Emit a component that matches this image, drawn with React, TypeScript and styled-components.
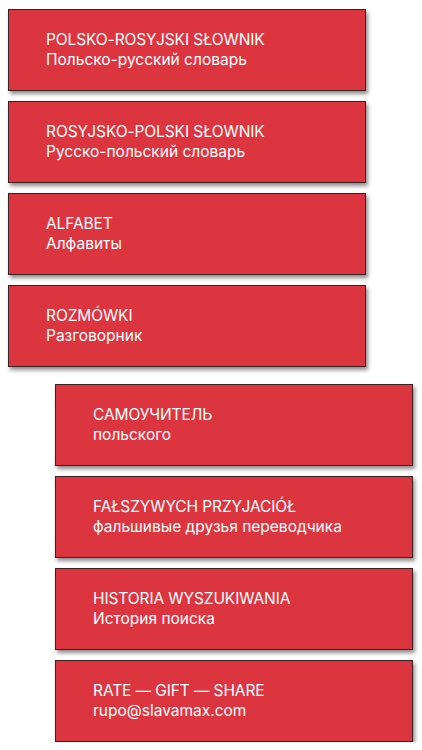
import React from "react";
import styled, { createGlobalStyle } from "styled-components";

const Global = createGlobalStyle`
  html, body { margin: 0; padding: 0; background: #ffffff; }
  body { font-family: Inter, "Open Sans", "Noto Sans", sans-serif; }
`;

const Page = styled.div`
  display: flex;
  flex-direction: column;
  gap: 17px;
  padding-top: 9px;
  width: 422px;
`;

const Group = styled.div<{ $indent: number }>`
  display: flex;
  flex-direction: column;
  gap: 10px;
  padding-left: ${(p) => p.$indent}px;
`;

const Card = styled.div`
  box-sizing: border-box;
  width: 358px;
  height: 82px;
  background: #dd3540;
  border: 1px solid #3a2224;
  box-shadow: 2px 3px 4px rgba(0, 0, 0, 0.45);
  display: flex;
  flex-direction: column;
  justify-content: center;
  padding-left: 37px;
  color: #ffffff;
  cursor: pointer;
`;

const Title = styled.div`
  font-size: 15.5px;
  line-height: 20px;
  font-weight: 400;
  letter-spacing: -0.1px;
`;

const Sub = styled.div`
  font-size: 15.5px;
  line-height: 20px;
  font-weight: 400;
  letter-spacing: 0;
`;

const first = [
  ["POLSKO-ROSYJSKI SŁOWNIK", "Польско-русский словарь"],
  ["ROSYJSKO-POLSKI SŁOWNIK", "Русско-польский словарь"],
  ["ALFABET", "Алфавиты"],
  ["ROZMÓWKI", "Разговорник"],
];

const second = [
  ["САМОУЧИТЕЛЬ", "польского"],
  ["FAŁSZYWYCH PRZYJACIÓŁ", "фальшивые друзья переводчика"],
  ["HISTORIA WYSZUKIWANIA", "История поиска"],
  ["RATE — GIFT — SHARE", "rupo@slavamax.com"],
];

export default function App() {
  return (
    <>
      <Global />
      <Page>
        <Group $indent={8}>
          {first.map(([t, s]) => (
            <Card key={t}>
              <Title>{t}</Title>
              <Sub>{s}</Sub>
            </Card>
          ))}
        </Group>
        <Group $indent={55}>
          {second.map(([t, s]) => (
            <Card key={t}>
              <Title>{t}</Title>
              <Sub>{s}</Sub>
            </Card>
          ))}
        </Group>
      </Page>
    </>
  );
}
